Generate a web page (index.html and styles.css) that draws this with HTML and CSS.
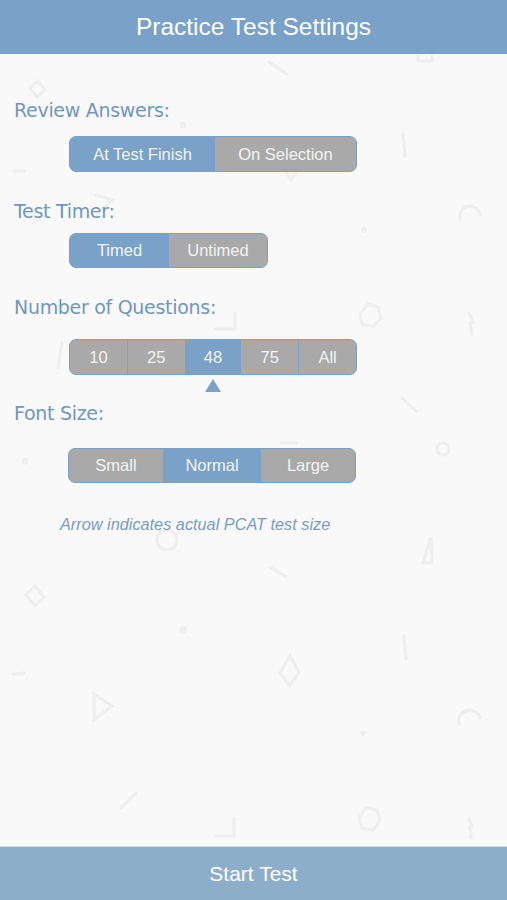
FILE: index.html
```html
<!DOCTYPE html>
<html>
<head>
<meta charset="utf-8">
<link rel="stylesheet" href="styles.css">
</head>
<body>
<div class="app">
  <header class="topbar">Practice Test Settings</header>
  <main class="content">
    <svg class="bg-shapes" width="507" height="792" viewBox="0 54 507 792" aria-hidden="true">
      <g fill="none" stroke="#eeeeee" stroke-width="3" stroke-linecap="round">
        <path d="M269 62 L287 74"/>
        <path d="M418 56 L418 61 L432 61 L432 56"/>
        <path d="M30 88 L38 81 L45 90 L37 97 Z"/>
        <path d="M403 134 L405 156"/>
        <path d="M14 171 L24 171"/>
        <path d="M286 172 L291 180 L297 172"/>
        <path d="M96 195 L112 200 L101 210"/>
        <path d="M460 219 A9 9 0 0 1 480 214"/>
        <path d="M360 314 L368 304 L378 307 L381 318 L373 327 L362 324 Z"/>
        <path d="M215 329 L235 329 L235 313"/>
        <path d="M469 313 L473 322 L470 323 L472 334"/>
        <path d="M62 342 L58 368"/>
        <path d="M402 398 L416 411"/>
        <circle cx="443" cy="449" r="6"/>
        <path d="M281 443 L296 443"/>
        <circle cx="167" cy="540" r="10"/>
        <path d="M423 563 L431 537 L432 563 Z"/>
        <path d="M270 567 L286 577"/>
        <path d="M26 595 L35 586 L44 597 L35 606 Z"/>
        <path d="M404 636 L406 659"/>
        <path d="M280 673 L290 656 L299 672 L290 686 Z"/>
        <path d="M13 674 L24 673"/>
        <path d="M94 694 L94 720 L112 706 Z"/>
        <path d="M459 724 A10 10 0 0 1 480 718"/>
        <path d="M121 808 L136 793"/>
        <path d="M215 836 L234 836 L234 818"/>
        <path d="M359 818 L366 808 L377 810 L380 821 L373 830 L362 828 Z"/>
        <path d="M469 818 L472 826 L470 827 L471 838"/>
      </g>
      <g fill="#eeeeee">
        <circle cx="183" cy="125" r="3.5"/>
        <circle cx="364" cy="230" r="3"/>
        <circle cx="25" cy="461" r="3.5"/>
        <circle cx="183" cy="630" r="4"/>
        <path d="M359 731 L367 731 L363 737 Z"/>
      </g>
    </svg>

    <section class="group g-review">
      <h2 class="label">Review Answers:</h2>
      <div class="seg seg-review">
        <span class="opt on">At Test Finish</span>
        <span class="opt">On Selection</span>
      </div>
    </section>

    <section class="group g-timer">
      <h2 class="label">Test Timer:</h2>
      <div class="seg seg-timer">
        <span class="opt on">Timed</span>
        <span class="opt">Untimed</span>
      </div>
    </section>

    <section class="group g-questions">
      <h2 class="label">Number of Questions:</h2>
      <div class="seg seg-questions">
        <span class="opt">10</span>
        <span class="opt div">25</span>
        <span class="opt on">48</span>
        <span class="opt">75</span>
        <span class="opt div">All</span>
      </div>
      <div class="arrow-row">
        <span class="arrow"></span>
      </div>
    </section>

    <section class="group g-font">
      <h2 class="label">Font Size:</h2>
      <div class="seg seg-font">
        <span class="opt">Small</span>
        <span class="opt on">Normal</span>
        <span class="opt">Large</span>
      </div>
    </section>

    <p class="note">Arrow indicates actual PCAT test size</p>
  </main>
  <footer class="bottombar">Start Test</footer>
</div>
</body>
</html>
```

FILE: styles.css
```css
* { box-sizing: border-box; }

html, body {
  margin: 0;
  padding: 0;
}

body {
  width: 507px;
  height: 900px;
  overflow: hidden;
  background: #f9f9f9;
  font-family: "Liberation Sans", Arial, sans-serif;
}

.app {
  display: flex;
  flex-direction: column;
  height: 900px;
}

.topbar {
  height: 54px;
  flex: none;
  background: #7aa1c7;
  color: #ffffff;
  font-size: 24.5px;
  display: flex;
  align-items: center;
  justify-content: center;
  padding-bottom: 1px;
}

.content {
  position: relative;
  flex: 1;
  padding-top: 44px;
  overflow: hidden;
}

.bg-shapes {
  position: absolute;
  left: 0;
  top: 0;
  z-index: 0;
}

.group {
  position: relative;
  z-index: 1;
}

.label {
  margin: 0 0 0 14px;
  height: 24px;
  line-height: 24px;
  font-family: "DejaVu Sans", sans-serif;
  font-weight: normal;
  font-size: 19px;
  letter-spacing: -0.3px;
  color: #7097c0;
}

.seg {
  display: flex;
  margin-left: 69px;
  height: 36px;
  border: 1px solid #7aa1c7;
  border-radius: 7px;
  overflow: hidden;
  background: #a9a9a9;
}

.opt {
  display: flex;
  align-items: center;
  justify-content: center;
  color: #f4f4f4;
  font-size: 16.5px;
  background: #a9a9a9;
}

.opt.on {
  background: #7aa1c7;
}

.opt.div {
  border-left: 1px solid #7aa1c7;
}

.g-review .seg { margin-top: 14px; }
.seg-review { width: 288px; }
.seg-review .opt:first-child { width: 145px; }
.seg-review .opt:last-child { flex: 1; }

.g-timer { margin-top: 27px; }
.g-timer .seg { margin-top: 10px; height: 35px; }
.seg-timer { width: 199px; }
.seg-timer .opt:first-child { width: 99px; }
.seg-timer .opt:last-child { flex: 1; }

.g-questions { margin-top: 27px; }
.g-questions .seg { margin-top: 20px; }
.seg-questions { width: 288px; }
.seg-questions .opt { flex: 1; }

.arrow-row {
  display: flex;
  justify-content: center;
  width: 288px;
  margin-left: 69px;
  padding-top: 4px;
  height: 17px;
}

.arrow {
  width: 0;
  height: 0;
  border-left: 8px solid transparent;
  border-right: 8px solid transparent;
  border-bottom: 13px solid #7aa1c7;
}

.g-font { margin-top: 9px; }
.g-font .seg { margin-top: 23px; margin-left: 68px; height: 35px; }
.seg-font { width: 288px; }
.seg-font .opt:nth-child(1) { width: 94px; }
.seg-font .opt:nth-child(2) { width: 98px; }
.seg-font .opt:nth-child(3) { flex: 1; }

.note {
  position: relative;
  z-index: 1;
  margin: 31px 0 0 60px;
  line-height: 20px;
  font-size: 16.3px;
  font-style: italic;
  color: #7a9cc4;
}

.bottombar {
  height: 54px;
  flex: none;
  background: #8daecb;
  border-top: 1px solid #d8dde2;
  color: #ffffff;
  font-size: 21px;
  display: flex;
  align-items: center;
  justify-content: center;
}
```
